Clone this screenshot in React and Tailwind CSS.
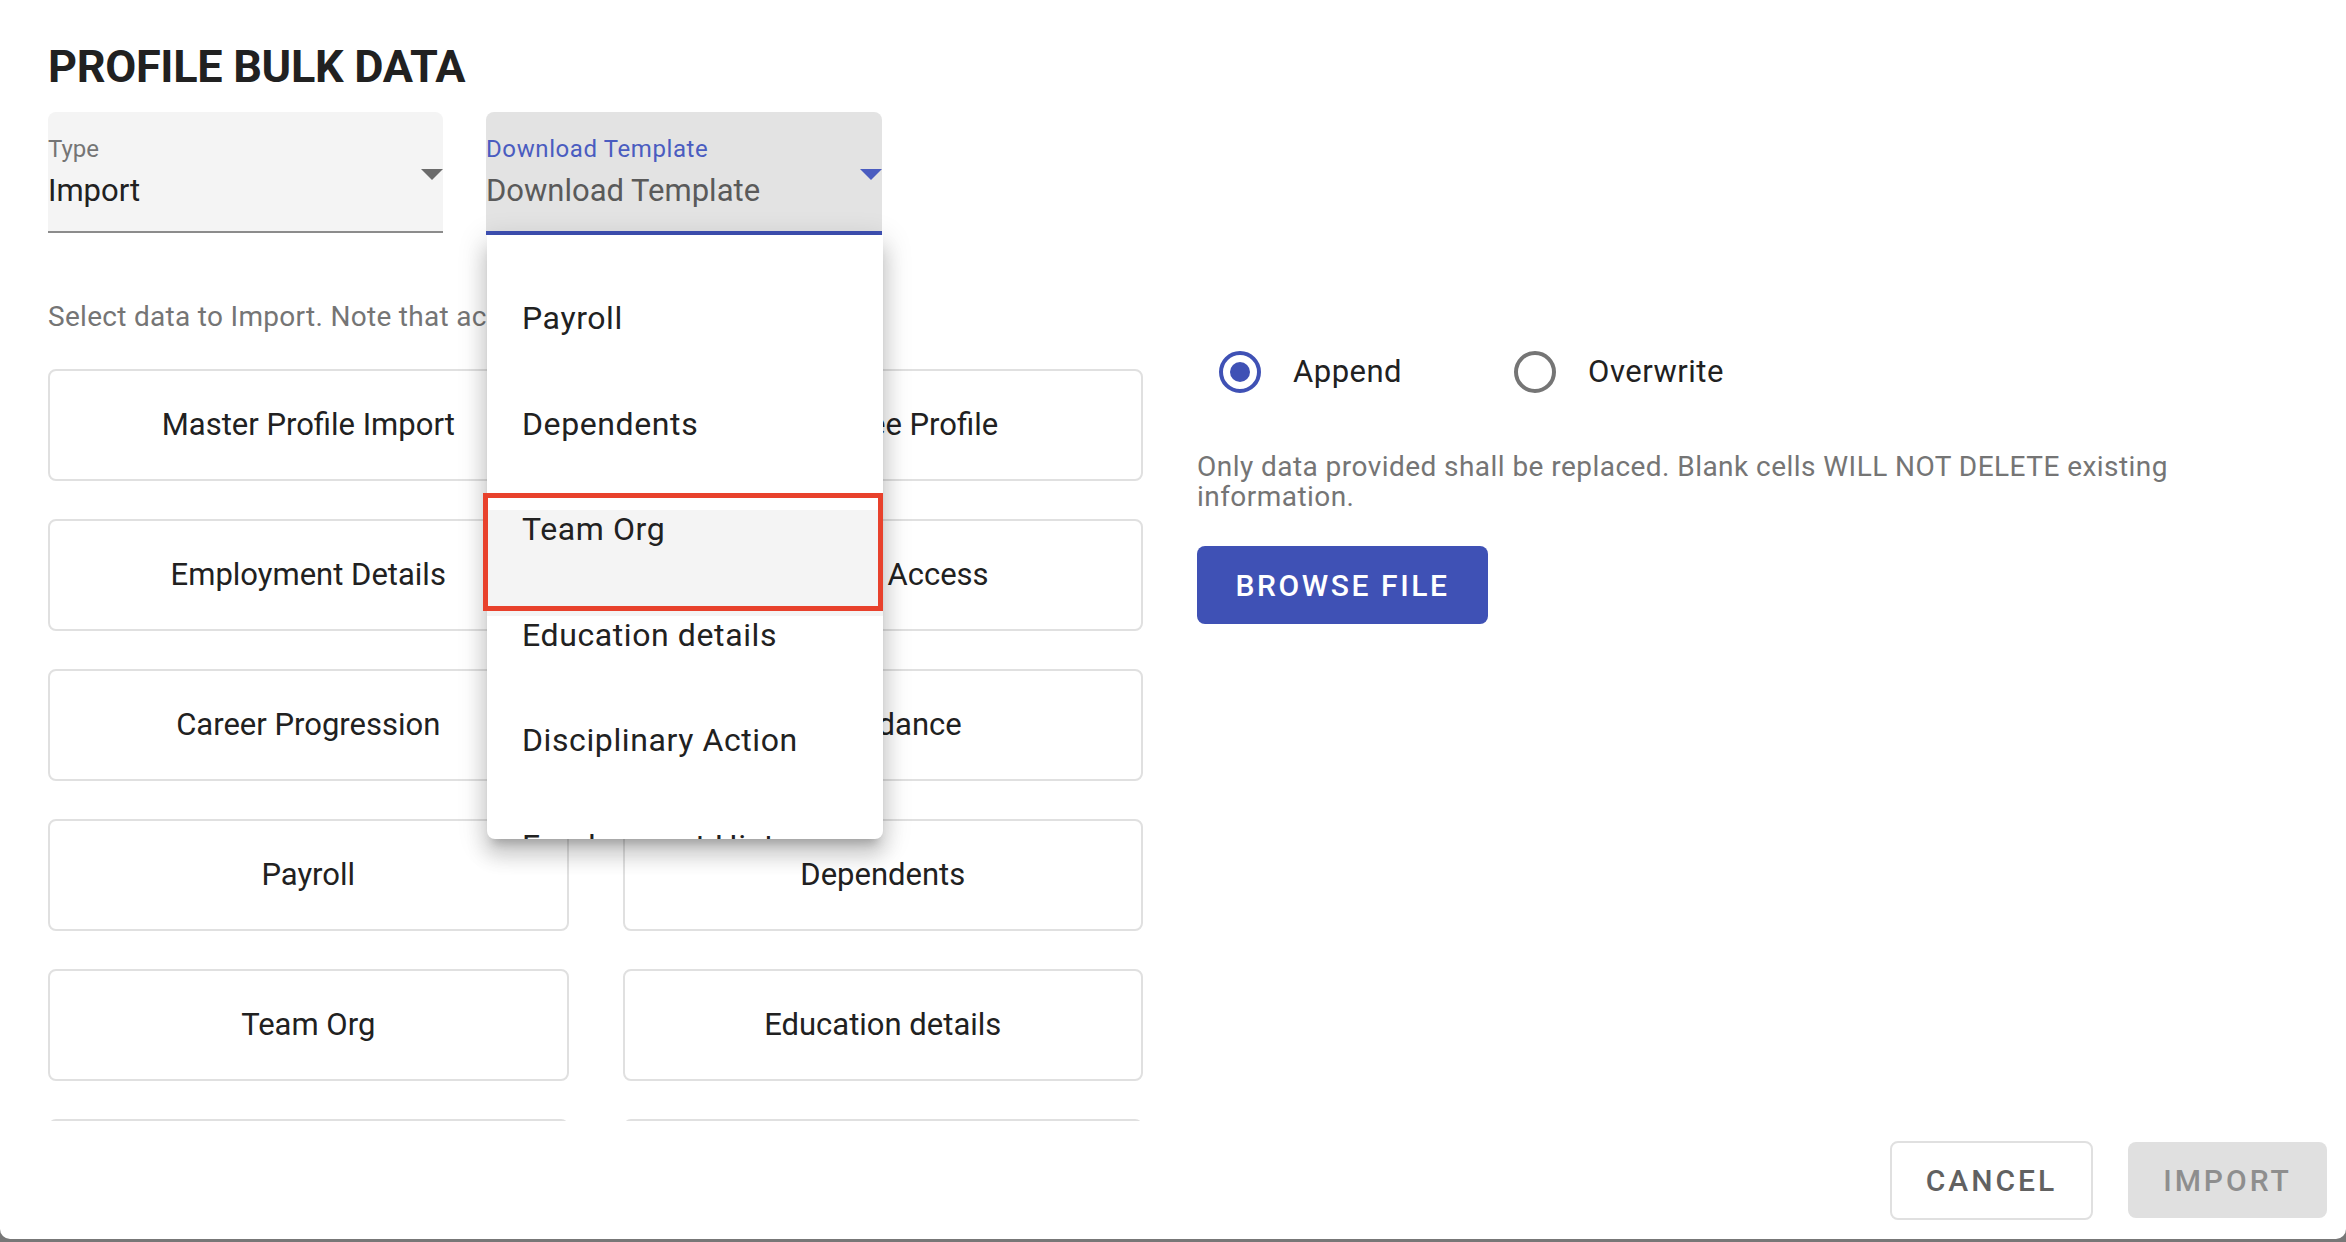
import React from "react";

// ─── Data ─────────────────────────────────────────────────────────────────────
const cards = [
  "Master Profile Import",
  "Employee Profile",
  "Employment Details",
  "System Access",
  "Career Progression",
  "Attendance",
  "Payroll",
  "Dependents",
  "Team Org",
  "Education details",
  "Disciplinary Action",
  "Employment History",
];

const menuItems = [
  "Attendance",
  "Payroll",
  "Dependents",
  "Team Org",
  "Education details",
  "Disciplinary Action",
  "Employment History",
];

// ─── Sub-components ───────────────────────────────────────────────────────────
const Arrow = ({ color }) => (
  <svg width="22" height="11" viewBox="0 0 22 11" className="shrink-0">
    <path d="M0 0h22L11 11z" fill={color} />
  </svg>
);

const Radio = ({ checked, label }) => (
  <label className="flex items-center gap-[32px]">
    <span
      className={[
        "flex h-[42px] w-[42px] items-center justify-center rounded-full border-[4px]",
        checked ? "border-[#3f51b5]" : "border-[#757575]",
      ].join(" ")}
    >
      {checked && <span className="h-[20px] w-[20px] rounded-full bg-[#3f51b5]" />}
    </span>
    <span className="text-[31px] leading-[36px] tracking-[0.5px] text-[#212121]">{label}</span>
  </label>
);

const Card = ({ label }) => (
  <div className="flex h-[112px] items-center justify-center rounded-[8px] border-2 border-[#e0e0e0] bg-white">
    <span className="text-[31px] leading-[38px] text-[#212121]">{label}</span>
  </div>
);

// ─── Page ─────────────────────────────────────────────────────────────────────
export default function App() {
  return (
    <div className="relative h-[1242px] w-[2346px] overflow-hidden bg-[#777777] font-['Roboto',sans-serif]">
      <div className="flex h-[1239px] flex-col rounded-b-[10px] bg-white">
        {/* ── Title ───────────────────────────────────────────── */}
        <h1 className="pl-[48px] pt-[40px] text-[45px] font-bold leading-[54px] tracking-[-0.3px] text-[#212121]">
          PROFILE BULK DATA
        </h1>

        {/* ── Selects ─────────────────────────────────────────── */}
        <div className="mt-[18px] flex items-start gap-[43px] pl-[48px]">
          <div className="flex h-[121px] w-[395px] items-start justify-between rounded-t-[8px] border-b-2 border-[#8c8c8c] bg-[#f4f4f4]">
            <div className="pt-[25px]">
              <p className="text-[24px] leading-[24px] text-[#757575]">Type</p>
              <p className="mt-[11px] text-[31px] leading-[38px] text-[#212121]">Import</p>
            </div>
            <div className="mt-[57px]">
              <Arrow color="#6b6b6b" />
            </div>
          </div>
          <div className="flex h-[123px] w-[396px] items-start justify-between rounded-t-[8px] border-b-4 border-[#3f51b5] bg-[#e3e3e3]">
            <div className="pt-[25px]">
              <p className="text-[24px] leading-[24px] tracking-[0.6px] text-[#4a5cc0]">Download Template</p>
              <p className="mt-[11px] text-[31px] leading-[38px] text-[#5a5a5a]">Download Template</p>
            </div>
            <div className="mt-[57px]">
              <Arrow color="#4a5cc0" />
            </div>
          </div>
        </div>

        {/* ── Helper ──────────────────────────────────────────── */}
        <p className="mt-[61px] pl-[48px] text-[28px] leading-[42px] tracking-[0.3px] text-[#757575]">
          Select data to Import. Note that access is subject to user rights.
        </p>

        {/* ── Body ────────────────────────────────────────────── */}
        <div className="mt-[12px] flex pl-[48px] pr-[48px]">
          <div className="mt-[19px] h-[752px] w-[1095px] shrink-0 overflow-hidden">
            <div className="grid grid-cols-2 gap-x-[54px] gap-y-[38px]">
              {cards.map((c) => (
                <Card key={c} label={c} />
              ))}
            </div>
          </div>

          <div className="ml-[54px] flex-1">
            <div className="flex h-[44px] items-center pl-[22px]">
              <Radio checked label="Append" />
              <div className="ml-[112px]">
                <Radio label="Overwrite" />
              </div>
            </div>
            <p className="mt-[58px] max-w-[1060px] text-[28px] leading-[30px] tracking-[0.45px] text-[#757575]">
              Only data provided shall be replaced. Blank cells WILL NOT DELETE existing information.
            </p>
            <button className="mt-[34px] flex h-[78px] w-[291px] items-center justify-center rounded-[8px] bg-[#3f51b5] text-[30px] font-medium tracking-[2.6px] text-white">
              BROWSE FILE
            </button>
          </div>
        </div>

        {/* ── Footer ──────────────────────────────────────────── */}
        <div className="flex flex-1 items-center justify-end gap-[35px] pr-[19px]">
          <button className="flex h-[79px] w-[203px] items-center justify-center rounded-[8px] border-2 border-[#e0e0e0] text-[30px] font-medium tracking-[3px] text-[#616161]">
            CANCEL
          </button>
          <button className="flex h-[76px] w-[199px] items-center justify-center rounded-[8px] bg-[#e0e0e0] text-[30px] font-medium tracking-[3px] text-[#8e8e8e]">
            IMPORT
          </button>
        </div>
      </div>

      {/* ── Open dropdown menu ────────────────────────────────── */}
      <div className="absolute left-[487px] top-[235px] h-[604px] w-[396px] overflow-hidden rounded-b-[8px] bg-white shadow-[0_10px_10px_-6px_rgba(0,0,0,0.2),0_16px_20px_2px_rgba(0,0,0,0.14),0_6px_28px_4px_rgba(0,0,0,0.12)]">
        <ul className="-mt-[41.5px]">
          {menuItems.map((m) => (
            <li
              key={m}
              className={[
                "h-[105.5px] px-[35px] text-[32px] leading-[38px] tracking-[0.6px] text-[#212121]",
                m === "Team Org" ? "bg-[#f4f4f4]" : "",
              ].join(" ")}
            >
              {m}
            </li>
          ))}
        </ul>
      </div>

      {/* ── Annotation ────────────────────────────────────────── */}
      <div className="absolute left-[483px] top-[493px] h-[118px] w-[400px] border-[5px] border-[#e8412c]" />
    </div>
  );
}
